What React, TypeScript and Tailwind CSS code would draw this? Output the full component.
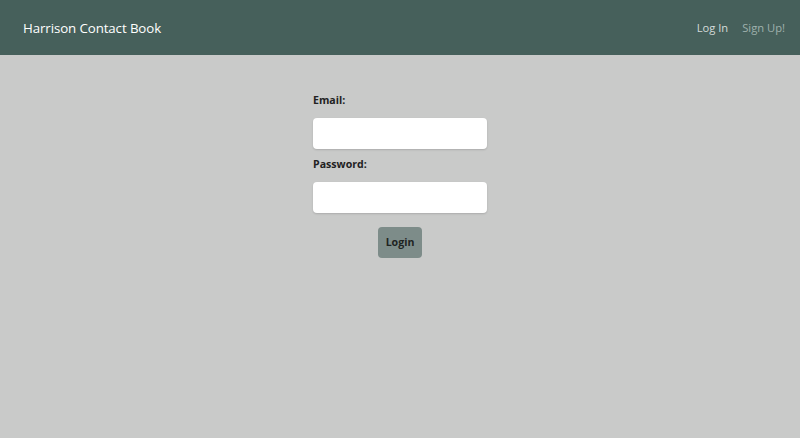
export default function App() {
  return (
    <div className="min-h-[438px] bg-[#c9cac9] font-['Open_Sans',sans-serif]">
      <nav className="h-[55px] bg-[#46605b] flex items-center justify-between pl-[23px] pr-[15px] pt-[2px]">
        <span className="text-[13.3px] text-white tracking-[-0.1px]">Harrison Contact Book</span>
        <div className="flex items-center gap-[14px] text-[11.2px]">
          <span className="text-[#d4dbd9]">Log In</span>
          <span className="text-[#9fb0ac]">Sign Up!</span>
        </div>
      </nav>
      <div className="flex justify-center pt-[38px]">
        <form className="w-[174px] flex flex-col">
          <label className="text-[10.6px] font-bold text-[#222] leading-[15px]">Email:</label>
          <input className="mt-[10px] h-[31px] w-full bg-white rounded-[4px] shadow-[0_1px_2px_rgba(0,0,0,0.15)]" />
          <label className="mt-[8px] text-[10.6px] font-bold text-[#222] leading-[15px]">Password:</label>
          <input type="password" className="mt-[10px] h-[31px] w-full bg-white rounded-[4px] shadow-[0_1px_2px_rgba(0,0,0,0.15)]" />
          <div className="flex justify-center mt-[14px]">
            <button type="button" className="w-[44px] h-[31px] rounded-[4px] bg-[#7d8c89] text-[10.6px] font-bold text-[#1e2422]">Login</button>
          </div>
        </form>
      </div>
    </div>
  );
}
